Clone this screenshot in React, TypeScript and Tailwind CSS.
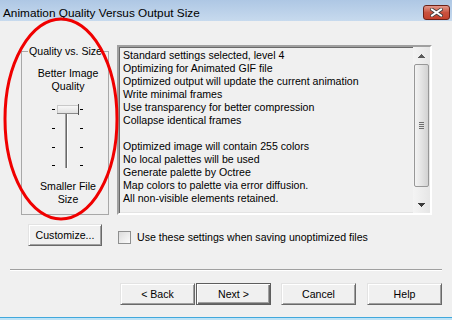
import clsx from "clsx";

const infoLines = [
  "Standard settings selected, level 4",
  "Optimizing for Animated GIF file",
  "Optimized output will update the current animation",
  "Write minimal frames",
  "Use transparency for better compression",
  "Collapse identical frames",
  "",
  "Optimized image will contain 255 colors",
  "No local palettes will be used",
  "Generate palette by Octree",
  "Map colors to palette via error diffusion.",
  "All non-visible elements retained.",
];

export default function App() {
  return (
    <div className="relative flex h-[320px] w-[452px] flex-col overflow-hidden bg-[#f0f0f0] font-['Liberation_Sans',Arial,sans-serif] text-black">
      <TitleBar />

      <div className="flex flex-1 flex-col text-[10.6px] leading-[13px]">
        <div className="flex pt-[24px] pl-[21px]">
          <QualityGroup />
          <InfoBox />
        </div>

        <div className="mt-[9px] flex items-center pl-[28px]">
          <DialogButton label="Customize..." className="w-[74px]" />
          <label className="ml-[16px] flex items-center gap-[6px] pt-[4px]">
            <span className="h-[13px] w-[13px] border border-[#8e8f8f] bg-gradient-to-br from-[#dcdcdc] to-[#fbfbfb]" />
            <span>Use these settings when saving unoptimized files</span>
          </label>
        </div>

        <div className="mx-[10px] mt-[23px] h-[2px] border-t border-b border-t-[#a0a0a0] border-b-white" />

        <div className="mt-[12px] flex justify-end pr-[10px]">
          <DialogButton label="< Back" className="w-[75px]" />
          <DialogButton label="Next >" className="ml-[1px] w-[75px]" isDefault />
          <DialogButton label="Cancel" className="ml-[10px] w-[75px]" />
          <DialogButton label="Help" className="ml-[11px] w-[75px]" />
        </div>
      </div>

      <div className="h-[3px] border-t border-t-[#40a8dc] bg-[#bfe3f6]" />

      <svg
        className="pointer-events-none absolute top-0 left-0"
        width={452}
        height={320}
      >
        <ellipse
          cx={61}
          cy={119}
          rx={56}
          ry={100}
          fill="none"
          stroke="#f00000"
          strokeWidth={3}
        />
      </svg>
    </div>
  );
}

function TitleBar() {
  return (
    <div className="flex h-[21px] items-start justify-between bg-gradient-to-b from-[#aec7e4] to-[#c7daee] pr-[2px] pl-[3px]">
      <span className="pt-[6px] text-[11.8px] leading-[14px] text-black">
        Animation Quality Versus Output Size
      </span>
      <div className="mt-[5px] flex h-[15px] w-[27px] items-center justify-center rounded-[3px] border border-[#6b2118] bg-gradient-to-b from-[#e2998d] via-[#c9523f] to-[#c4412c]">
        <svg width="13" height="9" viewBox="0 0 13 9">
          <path
            d="M2 1.5 L11 7.5 M11 1.5 L2 7.5"
            stroke="#3b3b3b"
            strokeWidth={3.6}
            strokeLinecap="square"
          />
          <path
            d="M2 1.5 L11 7.5 M11 1.5 L2 7.5"
            stroke="#ffffff"
            strokeWidth={2}
            strokeLinecap="square"
          />
        </svg>
      </div>
    </div>
  );
}

function QualityGroup() {
  return (
    <div className="relative mt-[6px] flex h-[164px] w-[88px] flex-col items-center border border-[#a8a8a8] pt-[15px] pl-[6px]">
      <span className="absolute -top-[7px] left-[6px] bg-[#f0f0f0] px-[1px]">
        Quality vs. Size
      </span>
      <span>Better Image</span>
      <span>Quality</span>
      <SliderGraphic />
      <span className="mt-[10px]">Smaller File</span>
      <span>Size</span>
    </div>
  );
}

function SliderGraphic() {
  const ticks = [7, 26, 45, 63];
  return (
    <svg
      className="mt-[9px]"
      width="35"
      height="68"
      viewBox="0 0 35 68"
      shapeRendering="crispEdges"
    >
      {ticks.map((y) => (
        <g key={y}>
          <rect x={1} y={y} width={3} height={1} fill="#000" />
          <rect x={29} y={y} width={3} height={1} fill="#000" />
        </g>
      ))}
      <rect x={14} y={11} width={1} height={55} fill="#a0a0a0" />
      <rect x={15} y={11} width={1} height={55} fill="#696969" />
      <rect x={16} y={11} width={1} height={55} fill="#ffffff" />
      <defs>
        <linearGradient id="thumb" x1="0" y1="0" x2="0" y2="1">
          <stop offset="0" stopColor="#fbfbfb" />
          <stop offset="1" stopColor="#dddddd" />
        </linearGradient>
      </defs>
      <rect x={6} y={3} width={22} height={9} fill="url(#thumb)" />
      <rect x={6} y={3} width={22} height={1} fill="#c8c8c8" />
      <rect x={6} y={3} width={1} height={9} fill="#c8c8c8" />
      <rect x={6} y={11} width={22} height={1} fill="#8a8a8a" />
      <rect x={27} y={2} width={1} height={11} fill="#505050" />
    </svg>
  );
}

function InfoBox() {
  return (
    <div className="ml-[8px] flex h-[170px] w-[315px] border-2 border-t-[#a0a0a0] border-r-white border-b-white border-l-[#a0a0a0] shadow-[inset_1px_1px_0_#696969,inset_-1px_-1px_0_#e3e3e3]">
      <div className="flex-1 pt-[2px] pl-[4px]">
        {infoLines.map((line, index) => (
          <div key={index} className="h-[13px] whitespace-nowrap">
            {line}
          </div>
        ))}
      </div>
      <ScrollBar />
    </div>
  );
}

function ScrollBar() {
  return (
    <div className="flex w-[17px] flex-col bg-gradient-to-r from-[#f4f4f4] to-[#e6e6e6]">
      <div className="flex h-[17px] items-center justify-center">
        <svg width="7" height="4" viewBox="0 0 7 4" shapeRendering="crispEdges">
          <path d="M3 0h1v1h1v1h1v1h1v1H0V3h1V2h1V1h1z" fill="#5a5a5a" />
        </svg>
      </div>
      <div className="mx-[1px] flex h-[123px] items-center justify-center rounded-[2px] border border-[#979797] bg-gradient-to-r from-[#f3f3f3] via-[#e4e4e4] to-[#d2d2d2]">
        <div className="flex flex-col gap-[1px]">
          <span className="h-[1px] w-[5px] bg-[#6e6e6e]" />
          <span className="h-[1px] w-[5px] bg-[#6e6e6e]" />
          <span className="h-[1px] w-[5px] bg-[#6e6e6e]" />
          <span className="h-[1px] w-[5px] bg-[#6e6e6e]" />
        </div>
      </div>
      <div className="flex-1" />
      <div className="flex h-[17px] items-center justify-center">
        <svg width="7" height="4" viewBox="0 0 7 4" shapeRendering="crispEdges">
          <path d="M0 0h7v1H6v1H5v1H4v1H3V3H2V2H1V1H0z" fill="#3c3c3c" />
        </svg>
      </div>
    </div>
  );
}

function DialogButton({
  label,
  className,
  isDefault,
}: {
  label: string;
  className?: string;
  isDefault?: boolean;
}) {
  return (
    <button
      className={clsx(
        "flex h-[22px] items-center justify-center border bg-[#f0f0f0] text-[10.6px]",
        isDefault
          ? "border-[#5e5e5e] shadow-[inset_1px_1px_0_#ffffff,inset_-1px_-1px_0_#696969,inset_-2px_-2px_0_#a0a0a0]"
          : "border-t-[#e3e3e3] border-r-[#696969] border-b-[#696969] border-l-[#e3e3e3] shadow-[inset_1px_1px_0_#ffffff,inset_-1px_-1px_0_#a0a0a0]",
        className,
      )}
    >
      {label}
    </button>
  );
}
